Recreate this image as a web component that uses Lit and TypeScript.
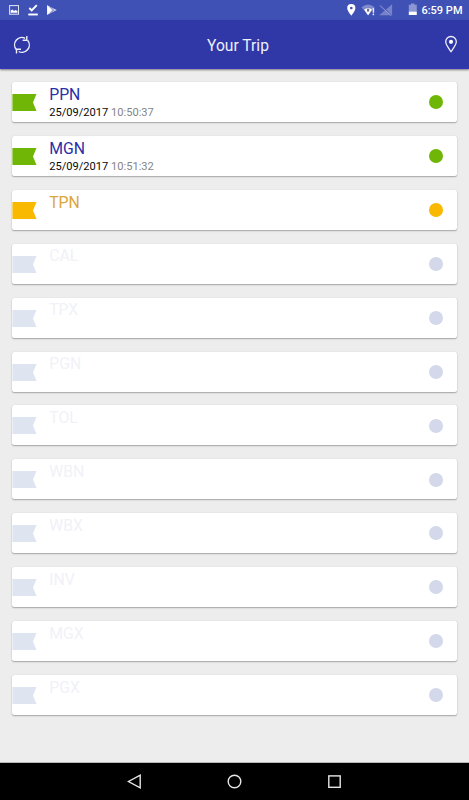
import { LitElement, html, css } from "lit";
import { customElement, property } from "lit/decorators.js";

type StopState = "done" | "next" | "pending";
interface Stop {
  code: string;
  state: StopState;
  date?: string;
  time?: string;
}

const STOPS: Stop[] = [
  { code: "PPN", state: "done", date: "25/09/2017", time: "10:50:37" },
  { code: "MGN", state: "done", date: "25/09/2017", time: "10:51:32" },
  { code: "TPN", state: "next" },
  ...["CAL", "TPX", "PGN", "TOL", "WBN", "WBX", "INV", "MGX", "PGX"].map(
    (code): Stop => ({ code, state: "pending" })
  ),
];

@customElement("status-bar")
class StatusBar extends LitElement {
  static styles = css`
    :host {
      display: flex;
      height: 20px;
      flex: none;
      background: #3f51b5;
      color: #fff;
      font-size: 11px;
      font-weight: 500;
    }
    svg { display: block; flex: none; }
    .system { margin-left: 281px; }
    .clock {
      flex: 1;
      text-align: right;
      padding-right: 6.5px;
      line-height: 22px;
      white-space: nowrap;
    }
  `;
  render() {
    return html`
      <svg width="60" height="20" viewBox="0 0 60 20">
        <rect x="9.6" y="5.6" width="8.9" height="8.6" fill="none" stroke="#e3e6f5" stroke-width="1" />
        <path d="M10.600 12.800V10.600l2-1.200 1.400 1.500 1.500-.8 2 1v1.700z" fill="#fff" />
        <path d="M29.300 8l2.400 2.500 5.100-5.300" fill="none" stroke="#fff" stroke-width="1.900" />
        <path d="M28.300 14.500h9.500" stroke="#fff" stroke-width="1.900" />
        <path d="M47 5l4 2.200 5.800 2.900L51 13l-4 2z" fill="#cdd2ee" />
        <path d="M47.300 5.500l4.600 4.600-4.600 4.600z" fill="#fff" />
        <path d="M50 6.800l3.600 3.300L50 13.400" fill="none" stroke="#5968c0" stroke-width=".8" />
      </svg>
      <svg class="system" width="78" height="20" viewBox="341 0 78 20">
        <path fill-rule="evenodd" fill="#fff" d="M351.300 4a4.100 4.100 0 0 1 4.100 4.100c0 2.900-4.100 7.600-4.100 7.600s-4.100-4.700-4.100-7.600a4.100 4.100 0 0 1 4.100-4.100zm0 2.700a1.300 1.300 0 1 0 .01 0z" />
        <path d="M361.500 7.200q6.600-5.400 13.200 0L368.100 15.400z" fill="#7e89ce" />
        <path d="M364.200 9.600q3.900-2.800 7.800 0l-3.900 5.600z" fill="#fff" />
        <path d="M367 8.800h2.200v2.800H367z" fill="#6d6d78" />
        <path d="M373.400 8v4.800M373.400 13.600v1.700" stroke="#e7e9f5" stroke-width="1.500" />
        <path d="M379.200 15.300L392.100 4.300v11z" fill="#7782c9" />
        <path d="M380.700 4.900l11 10.400" stroke="#4a5abb" stroke-width="1" />
        <path d="M379.800 5.500l11.400 10.200" stroke="#929bd5" stroke-width="1" />
        <path d="M411 3.500h3.500v1.200h2.300V12h-8V4.700h2.200z" fill="#8c96d2" />
        <path d="M408.800 11.700h8V15h-8z" fill="#fff" />
      </svg>
      <span class="clock">6:59 PM</span>
    `;
  }
}

@customElement("trip-header")
class TripHeader extends LitElement {
  static styles = css`
    :host {
      display: flex;
      flex: none;
      height: 49px;
      align-items: center;
      justify-content: space-between;
      box-sizing: border-box;
      padding: 0 9px 0 12px;
      background: #3037a6;
      border-bottom: 1px solid #3436bd;
      box-shadow: 0 1px 2px rgba(0, 0, 0, 0.5);
      color: #eef0fa;
    }
    svg { display: block; }
    .title { font-size: 15.6px; line-height: 20px; padding: 3px 0 0 2px; }
  `;
  render() {
    return html`
      <svg width="20" height="22" viewBox="12 33 20 22" fill="none" stroke="#eceefa" stroke-width="1.400">
        <path d="M16.300 49.500A7.300 7.300 0 0 1 25.200 38.300M27.600 40.300A7.300 7.300 0 0 1 18.700 51.500" />
        <path d="M22.600 40.300h4.200V35.900M21 49.300h-4.500V53.500" />
      </svg>
      <span class="title">Your Trip</span>
      <svg width="18" height="22" viewBox="442 33.500 18 22">
        <path d="M451 37a5.300 5.300 0 0 1 5.300 5.300c0 3-3 6.600-5.300 9.800-2.300-3.200-5.300-6.800-5.300-9.800a5.300 5.300 0 0 1 5.300-5.300z" fill="none" stroke="#eef0fa" stroke-width="1.300" />
        <circle cx="451" cy="42.300" r="2.100" fill="#fff" />
      </svg>
    `;
  }
}

@customElement("stop-card")
class StopCard extends LitElement {
  @property({ attribute: false }) stop!: Stop;
  static styles = css`
    :host { display: block; }
    .card {
      display: flex;
      height: 40px;
      background: #fff;
      border-radius: 2px;
      box-shadow: 0 1px 1.500px rgba(0, 0, 0, 0.3), 0 0 1px rgba(0, 0, 0, 0.14);
    }
    .flag { flex: none; width: 24.500px; height: 17px; margin-top: 12px; fill: var(--mark); }
    .text { flex: 1; padding-left: 12.300px; white-space: nowrap; }
    .code { font-size: 15.800px; line-height: 18px; padding-top: 3.700px; color: var(--ink); }
    .when { font-size: 11.100px; line-height: 13px; margin-top: 2.300px; color: #858585; }
    .date { color: #080808; }
    .dot {
      flex: none;
      width: 14px;
      height: 14px;
      border-radius: 50%;
      margin: 13.200px 14px 0 0;
      background: var(--dot);
    }
    .done { --mark: #6fb606; --dot: #6fb606; --ink: #2a2fa8; }
    .next { --mark: #f9b900; --dot: #f9b900; --ink: #dba63c; }
    .pending { --mark: #dee4f0; --dot: #d3d8ea; --ink: #f1f1f8; }
  `;
  render() {
    const { code, state, date, time } = this.stop;
    return html`
      <div class="card ${state}">
        <svg class="flag" viewBox="0 0 24.500 17"><path d="M.4 0H24.500L21 8.500 24.500 17H.4z" /></svg>
        <div class="text">
          <div class="code">${code}</div>
          ${date ? html`<div class="when"><span class="date">${date}</span> ${time}</div>` : null}
        </div>
        <span class="dot"></span>
      </div>
    `;
  }
}

@customElement("nav-bar")
class NavBar extends LitElement {
  static styles = css`
    :host {
      display: flex;
      flex: none;
      height: 37px;
      background: #000;
      align-items: center;
      justify-content: center;
      gap: 80px;
      padding-right: 1px;
      box-shadow: 0 -1px 0 #b8b8b8;
    }
    svg { display: block; fill: none; stroke: #e6e6e6; stroke-width: 1.400; }
  `;
  render() {
    return html`
      <svg width="20" height="20"><path d="M16.200 3.100v12.800L4.500 9.500z" /></svg>
      <svg width="20" height="20"><circle cx="10.500" cy="9.500" r="6.300" /></svg>
      <svg width="20" height="20"><rect x="4.800" y="3.900" width="11.400" height="11.400" /></svg>
    `;
  }
}

@customElement("app-root")
class AppRoot extends LitElement {
  static styles = css`
    :host {
      display: flex;
      flex-direction: column;
      height: 100vh;
      overflow: hidden;
      background: #ededed;
      font-family: Roboto, sans-serif;
    }
    .list {
      flex: 1;
      min-height: 0;
      display: flex;
      flex-direction: column;
      gap: 13.900px;
      padding: 13.100px 12px 0 12.400px;
    }
  `;
  render() {
    return html`
      <status-bar></status-bar>
      <trip-header></trip-header>
      <main class="list">${STOPS.map((s) => html`<stop-card .stop=${s}></stop-card>`)}</main>
      <nav-bar></nav-bar>
    `;
  }
}
